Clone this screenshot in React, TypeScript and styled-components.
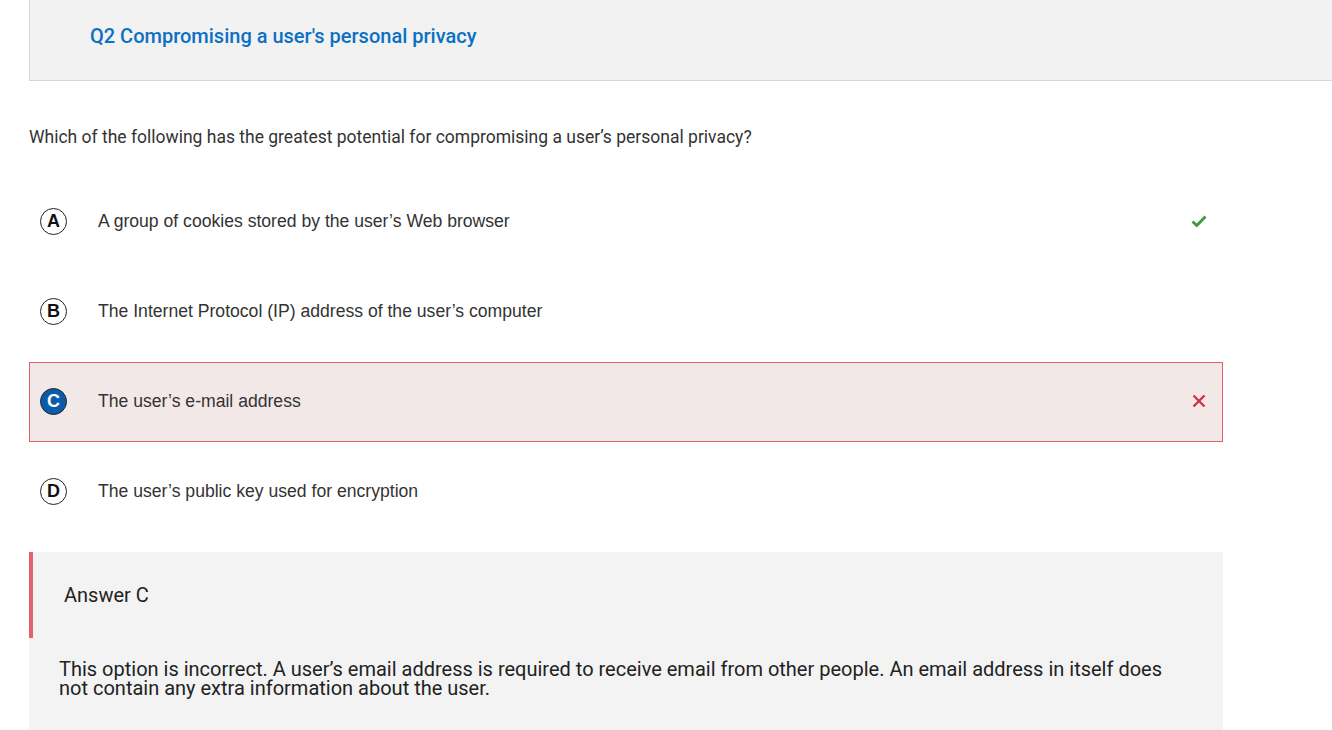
import React from "react";
import styled, {createGlobalStyle} from "styled-components";

const GlobalStyle = createGlobalStyle`
  body {
    margin: 0;
    background: #ffffff;
    font-family: Roboto, "Liberation Sans", sans-serif;
    color: #333333;
  }
`;

const Page = styled.div`
  padding-left: 29px;
  width: 1303px;
`;

const Header = styled.header`
  height: 81px;
  box-sizing: border-box;
  background: #f2f2f2;
  border-left: 1px solid #d6d6d6;
  border-bottom: 1px solid #d6d6d6;
  padding: 0 60px;
  display: flex;
  align-items: center;
  padding-bottom: 8px;
`;

const Title = styled.h2`
  margin: 0;
  font-size: 20px;
  font-weight: 500;
  color: #0b70c4;
`;

const Question = styled.p`
  margin: 44px 0 33px;
  font-size: 17.5px;
  line-height: 24px;
  color: #333333;
`;

const Options = styled.ul`
  list-style: none;
  margin: 0;
  padding: 0;
  width: 1194px;
  display: flex;
  flex-direction: column;
  gap: 10px;
`;

const Option = styled.li<{ $wrong?: boolean }>`
  height: 80px;
  box-sizing: border-box;
  display: flex;
  align-items: center;
  padding: 0 14px 2px 10px;
  border: 1px solid ${p => p.$wrong ? "#e0606e" : "transparent"};
  background: ${p => p.$wrong ? "#f3e8e8" : "transparent"};
`;

const Letter = styled.span<{ $selected?: boolean }>`
  width: 25px;
  height: 25px;
  border-radius: 50%;
  border: 1.5px solid #222;
  background: ${p => p.$selected ? "#0a5caa" : "#fff"};
  color: ${p => p.$selected ? "#fff" : "#111"};
  font-family: "Liberation Sans", Arial, sans-serif;
  font-weight: 700;
  font-size: 18px;
  display: flex;
  align-items: center;
  justify-content: center;
  flex-shrink: 0;
`;

const OptionText = styled.span`
  flex: 1;
  margin-left: 31px;
  font-family: "Liberation Sans", Arial, sans-serif;
  font-size: 17.6px;
  color: #333333;
`;

const Mark = styled.span`
  width: 18px;
  height: 18px;
  display: flex;
  align-items: center;
  justify-content: center;
`;

const Feedback = styled.section`
  margin-top: 20px;
  width: 1194px;
  background: #f3f3f3;
  padding-bottom: 34px;
`;

const FeedbackHead = styled.div`
  height: 86px;
  border-left: 4px solid #e4606e;
  display: flex;
  align-items: center;
  padding-left: 31px;
  font-size: 20px;
  color: #222;
`;

const FeedbackBody = styled.p`
  margin: 22px 0 0;
  padding: 0 50px 0 30px;
  font-size: 20px;
  line-height: 19px;
  color: #222;
`;

const Check = () => (
  <svg width="16" height="14" viewBox="0 0 16 14">
    <path d="M1.5 7.5 L5.8 11.5 L14.5 2.5" fill="none" stroke="#3d9a3d" strokeWidth="2.8"/>
  </svg>
);

const Cross = () => (
  <svg width="14" height="14" viewBox="0 0 14 14">
    <path d="M1.5 1.5 L12.5 12.5 M12.5 1.5 L1.5 12.5" fill="none" stroke="#cc3348" strokeWidth="2.4"/>
  </svg>
);

interface IOption {
  letter: string;
  text: string;
  correct?: boolean;
  selected?: boolean;
}

const options: IOption[] = [
  {letter: "A", text: "A group of cookies stored by the user\u2019s Web browser", correct: true},
  {letter: "B", text: "The Internet Protocol (IP) address of the user\u2019s computer"},
  {letter: "C", text: "The user\u2019s e-mail address", selected: true},
  {letter: "D", text: "The user\u2019s public key used for encryption"},
];

function App() {
  return <Page>
    <GlobalStyle/>
    <Header>
      <Title>Q2 Compromising a user's personal privacy</Title>
    </Header>
    <Question>Which of the following has the greatest potential for compromising a user’s personal privacy?</Question>
    <Options>
      {options.map(o => <Option key={o.letter} $wrong={o.selected && !o.correct}>
        <Letter $selected={o.selected}>{o.letter}</Letter>
        <OptionText>{o.text}</OptionText>
        <Mark>
          {o.correct ? <Check/> : o.selected ? <Cross/> : null}
        </Mark>
      </Option>)}
    </Options>
    <Feedback>
      <FeedbackHead>Answer C</FeedbackHead>
      <FeedbackBody>
        This option is incorrect. A user’s email address is required to receive email from other people. An email address in itself does not contain any extra information about the user.
      </FeedbackBody>
    </Feedback>
  </Page>;
}

export default App;
